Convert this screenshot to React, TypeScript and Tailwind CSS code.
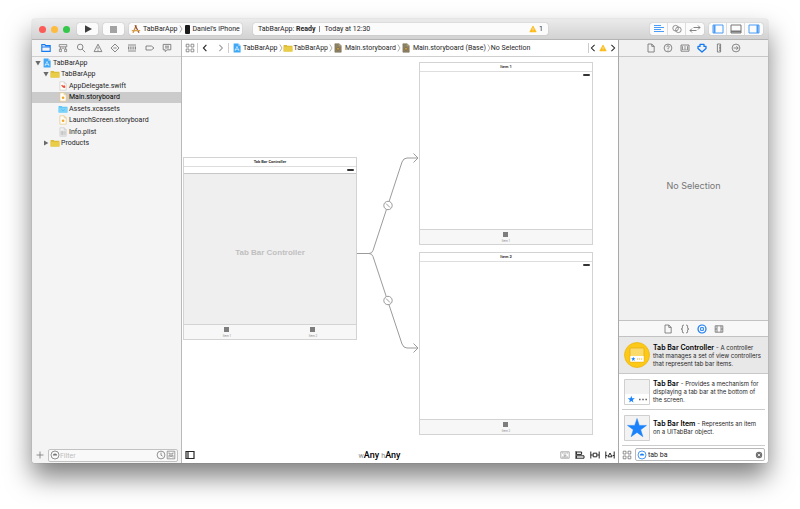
import { useState, type ReactNode } from "react"

type IconProps = { children: ReactNode; className?: string }

function Icon({ children, className = "size-[10px]" }: IconProps) {
  return (
    <svg
      viewBox="0 0 10 10"
      className={`shrink-0 ${className}`}
      fill="none"
      stroke="currentColor"
      strokeWidth="0.8"
      aria-hidden="true"
    >
      {children}
    </svg>
  )
}

function Warning({ className }: { className?: string }) {
  return (
    <Icon className={className}>
      <path d="M5 1.2 9 8.6H1Z" fill="#fdb913" stroke="#fdb913" strokeLinejoin="round" />
      <path d="M5 3.6v2.6M5 7v1" stroke="#fff" />
    </Icon>
  )
}

function ProjectIcon() {
  return (
    <Icon>
      <path d="M1.6.6h4.8l2.2 2.2v6.8h-7Z" fill="#41a8f5" stroke="none" />
      <path d="M6.4.6v2.2h2.2Z" fill="#b5dcfb" stroke="none" />
      <path d="M5 3.4 3 8M5 3.4 7 8M2.8 6.4h4.4" stroke="#d8eefe" strokeWidth="0.7" />
    </Icon>
  )
}

function FolderIcon({ blue = false }: { blue?: boolean }) {
  return (
    <Icon>
      <path d="M.6 2h3l.8.8h5V8.6H.6Z" fill={blue ? "#5cc5f6" : "#d9b935"} stroke="none" />
      <path d="M.6 3.8h8.8v4.8H.6Z" fill={blue ? "#7bd3fa" : "#eacd47"} stroke="none" />
      {blue && <path d="M3.2 5.2 5 7l1.8-1.8" stroke="#45b0e6" strokeWidth="0.5" />}
    </Icon>
  )
}

function FileIcon({ kind }: { kind: "swift" | "storyboard" | "plist" | "dark" }) {
  const dark = kind === "dark"
  const line = kind === "storyboard" ? "#e0bd74" : "#c4c4c4"
  return (
    <Icon>
      <path
        d="M1.9.8h4.3l2 2v6.4H1.9Z"
        fill={dark ? "#8d8265" : kind === "plist" ? "#f2f2f2" : "#fffdf8"}
        stroke={dark ? "#776e57" : line}
        strokeWidth="0.6"
      />
      <path d="M6.2.8v2h2" stroke={dark ? "#c3b991" : line} strokeWidth="0.6" />
      {kind === "swift" && (
        <path
          d="M3.4 4.4c1 1.6 2.4 2.4 3.6 2.2.2-.8-.2-1.6-.9-2.3.2.6.1 1-.1 1.2L4.4 4.2l.9 1.5Z"
          fill="#e8402f"
          stroke="#e8402f"
          strokeWidth="0.5"
        />
      )}
      {kind === "storyboard" && <circle cx="5.1" cy="5.8" r="1.3" fill="#f0a52b" stroke="none" />}
      {dark && <circle cx="5" cy="5.8" r="1.3" fill="#e0ac3d" stroke="#5e553e" strokeWidth="0.5" />}
      {kind === "plist" && <path d="M3 4.2h4.2v3.6H3ZM3 5.4h4.2M3 6.6h4.2M4.6 4.2v3.6" stroke="#a5a5a5" strokeWidth="0.4" />}
    </Icon>
  )
}

const navigatorTabs: { label: string; art: ReactNode }[] = [
  {
    label: "Project navigator",
    art: <path d="M.8 8.4V1.6h3l.8 1h4.6v5.8ZM.8 4h8.4" strokeWidth="1.1" />,
  },
  {
    label: "Symbol navigator",
    art: <path d="M1.2 1.6h7.6v2.2H1.2ZM2.4 3.8v2.4M7.6 3.8v2.4M1.4 6.2h2v2.4h-2ZM6.6 6.2h2v2.4h-2ZM3.6 5.2h2.8" strokeWidth="0.7" />,
  },
  {
    label: "Find navigator",
    art: (
      <>
        <circle cx="4.2" cy="4" r="2.8" />
        <path d="M6.2 6.2 9.2 9.2" />
      </>
    ),
  },
  { label: "Issue navigator", art: <path d="M5 1.2 8.9 8.6H1.1ZM5 3.8v2.4M5 6.9v.9" /> },
  {
    label: "Test navigator",
    art: <path d="M5 1 9 5 5 9 1 5ZM3.4 5h3.2" strokeLinejoin="round" />,
  },
  {
    label: "Debug navigator",
    art: <path d="M1 2h8M1 8h8M1.5 3.4v3.2M3.2 3.4v3.2M5 3.4v3.2M6.8 3.4v3.2M8.5 3.4v3.2" />,
  },
  { label: "Breakpoint navigator", art: <path d="M1 3h5.4L9 5 6.4 7H1Z" strokeLinejoin="round" /> },
  {
    label: "Report navigator",
    art: <path d="M1.2 1.4h7.6v5.4H5L3.2 8.6V6.8h-2ZM3 3.2h4M3 4.9h4" strokeLinejoin="round" />,
  },
]

const fileArt = <path d="M2 1h3.8L8.2 3.4V9H2ZM5.8 1v2.4h2.4" />

const inspectorTabs: { label: string; art: ReactNode }[] = [
  { label: "File inspector", art: fileArt },
  {
    label: "Quick help inspector",
    art: (
      <>
        <circle cx="5" cy="5" r="3.9" />
        <path d="M3.8 4.1c0-1.8 2.6-1.6 2.5-.1C6.2 4.9 5 4.8 5 6M5 6.7v.9" />
      </>
    ),
  },
  {
    label: "Identity inspector",
    art: <path d="M1 2h8v6.2H1ZM2.4 3.2v3.8M3.8 6.8c0-1.4 2.4-1.4 2.4 0M5 3.2v1.6M7.6 3.2v3.8" />,
  },
  {
    label: "Attributes inspector",
    art: <path d="M3 1.4h4V3.4h2V5.4L5 9 1 5.4v-2h2Z" strokeWidth="1.3" strokeLinejoin="round" />,
  },
  { label: "Size inspector", art: <path d="M3.4 1h3.2v8H3.4ZM5 2.8h1.6M5 4.3h1.6M5 5.8h1.6M5 7.3h1.6" /> },
  {
    label: "Connections inspector",
    art: (
      <>
        <circle cx="5" cy="5" r="3.9" />
        <path d="M2.6 5h4.6M5.4 3.2 7.2 5 5.4 6.8" />
      </>
    ),
  },
]

const libraryTabs: { label: string; art: ReactNode }[] = [
  { label: "File template library", art: fileArt },
  {
    label: "Code snippet library",
    art: (
      <path
        d="M4 1.2h-.6q-1 0-1 1v1.6Q2.4 5 1.2 5q1.2 0 1.2 1.2v1.6q0 1 1 1H4M6 1.2h.6q1 0 1 1v1.6Q7.6 5 8.8 5 7.6 5 7.6 6.2v1.6q0 1-1 1H6"
        strokeWidth="0.9"
      />
    ),
  },
  {
    label: "Object library",
    art: (
      <>
        <circle cx="5" cy="5" r="4" strokeWidth="1.2" />
        <path d="M3.6 3.6h2.8v2.8H3.6Z" strokeWidth="0.9" />
      </>
    ),
  },
  { label: "Media library", art: <path d="M1.2 1.8h7.6v6.4H1.2ZM3 1.8v6.4M7 1.8v6.4M1.2 5H3M7 5h1.8" /> },
]

function TabStrip({
  tabs,
  initial,
  className,
}: {
  tabs: { label: string; art: ReactNode }[]
  initial: number
  className: string
}) {
  const [active, setActive] = useState(initial)
  return (
    <div role="tablist" className={`flex items-center ${className}`}>
      {tabs.map((tab, i) => (
        <button
          key={tab.label}
          type="button"
          role="tab"
          aria-selected={i === active}
          aria-label={tab.label}
          onClick={() => setActive(i)}
          className={i === active ? "text-[#1479f5]" : "text-[#6c6c6c]"}
        >
          <Icon>{tab.art}</Icon>
        </button>
      ))}
    </div>
  )
}

function Toolbar() {
  const control = "flex h-3 items-center rounded-[2px] bg-[#fbfbfb] shadow-[0_0_1px_rgba(0,0,0,0.35)]"
  return (
    <header className="flex h-[21px] items-center border-b border-[#b4b4b4] bg-linear-to-b from-[#ebebeb] to-[#d2d2d2] px-[5px]">
      <div className="ml-[2px] flex gap-[5px]">
        <button type="button" aria-label="Close" className="size-[7px] rounded-full bg-[#fc5b57]" />
        <button type="button" aria-label="Minimize" className="size-[7px] rounded-full bg-[#fdbc40]" />
        <button type="button" aria-label="Zoom" className="size-[7px] rounded-full bg-[#34c84a]" />
      </div>
      <button type="button" aria-label="Run" className={`ml-[7px] w-[21px] justify-center ${control}`}>
        <Icon>
          <path d="M2 1.2v7.6L9 5Z" fill="#3c3c3c" stroke="none" />
        </Icon>
      </button>
      <button type="button" aria-label="Stop" className={`ml-[5px] w-[21px] justify-center ${control}`}>
        <span className="size-[7px] bg-[#a3a3a3]" />
      </button>
      <button type="button" className={`ml-[5px] w-[113px] pl-[2px] whitespace-nowrap ${control}`}>
        <Icon>
          <path d="M5.4 1.2 2 8.8" stroke="#c98a3c" strokeWidth="1.3" />
          <path d="M4 1.2 8 8.8" stroke="#8c4a35" strokeWidth="1.2" />
          <path d="M.8 6.6h8.4" stroke="#d8a24c" strokeWidth="1.2" />
        </Icon>
        <span className="ml-[2px]">TabBarApp</span>
        <Chevron />
        <span className="ml-[2px] h-[9px] w-[5px] rounded-[1px] bg-[#1b1b1b]" />
        <span className="ml-[3px]">Daniel's iPhone</span>
      </button>
      <div className={`mr-[102px] ml-[11px] flex-1 px-[5px] ${control}`}>
        <span>
          TabBarApp: <b className="font-bold">Ready</b>
        </span>
        <span className="mx-[4px] h-[6px] w-px bg-[#8a8a8a]" />
        <span>Today at 12:30</span>
        <Warning className="ml-auto size-[8px]" />
        <span className="ml-[2px]">1</span>
      </div>
      <div className={`${control} divide-x divide-[#dddddd]`}>
        <button type="button" aria-label="Standard editor" className="flex h-3 w-[18px] items-center justify-center">
          <svg viewBox="0 0 12 10" className="h-[10px] w-3" fill="#4a9cf7" aria-hidden="true">
            <path d="M1 1h7v1H1ZM1 3h10v1H1ZM1 5h7v1H1ZM1 7h10v1H1Z" />
          </svg>
        </button>
        <button type="button" aria-label="Assistant editor" className="flex h-3 w-[18px] items-center justify-center text-[#777777]">
          <Icon>
            <circle cx="3.6" cy="4.2" r="2.8" />
            <circle cx="6.4" cy="5.8" r="2.8" />
          </Icon>
        </button>
        <button type="button" aria-label="Version editor" className="flex h-3 w-[18px] items-center justify-center text-[#777777]">
          <svg viewBox="0 0 12 10" className="h-[10px] w-3" fill="none" stroke="currentColor" aria-hidden="true">
            <path d="M4.5 3.5h6.5M9 1.5l2 2-2 2M7.5 6.5H1M3 4.5l-2 2 2 2" strokeWidth="0.9" />
          </svg>
        </button>
      </div>
      <div className={`ml-[5px] divide-x divide-[#dddddd] ${control}`}>
        <PaneToggle label="Toggle navigator" on bar={<path d="M2.5 1v8" strokeWidth="2" />} />
        <PaneToggle label="Toggle debug area" bar={<path d="M1 7.5h10" strokeWidth="2" />} />
        <PaneToggle label="Toggle utilities" on bar={<path d="M9.5 1v8" strokeWidth="2" />} />
      </div>
    </header>
  )
}

function PaneToggle({ label, bar, on = false }: { label: string; bar: ReactNode; on?: boolean }) {
  return (
    <button
      type="button"
      aria-label={label}
      aria-pressed={on}
      className={`flex h-3 w-[18px] items-center justify-center ${on ? "text-[#4a9cf7]" : "text-[#777777]"}`}
    >
      <svg viewBox="0 0 12 10" className="h-[10px] w-3" fill="none" stroke="currentColor" aria-hidden="true">
        <path d="M1 1h10v8H1Z" />
        {bar}
      </svg>
    </button>
  )
}

function Chevron() {
  return (
    <svg viewBox="0 0 4 10" className="ml-px h-[10px] w-1 shrink-0" fill="none" stroke="#8c8c8c" strokeWidth="0.7" aria-hidden="true">
      <path d="M.8 1.5 3 5 .8 8.5" />
    </svg>
  )
}

const indent = ["pl-[3px]", "pl-[11px]", "pl-[19px]"]

const files: { name: string; depth: number; open?: boolean; icon: ReactNode }[] = [
  { name: "TabBarApp", depth: 0, open: true, icon: <ProjectIcon /> },
  { name: "TabBarApp", depth: 1, open: true, icon: <FolderIcon /> },
  { name: "AppDelegate.swift", depth: 2, icon: <FileIcon kind="swift" /> },
  { name: "Main.storyboard", depth: 2, icon: <FileIcon kind="storyboard" /> },
  { name: "Assets.xcassets", depth: 2, icon: <FolderIcon blue /> },
  { name: "LaunchScreen.storyboard", depth: 2, icon: <FileIcon kind="storyboard" /> },
  { name: "Info.plist", depth: 2, icon: <FileIcon kind="plist" /> },
  { name: "Products", depth: 1, open: false, icon: <FolderIcon /> },
]

function FilterGlyph() {
  return (
    <>
      <circle cx="5" cy="5" r="4" />
      <path d="M2.8 5.4a2.2 1.8 0 0 1 4.4 0Z" fill="currentColor" stroke="none" />
    </>
  )
}

function Navigator() {
  const [selected, setSelected] = useState(3)
  return (
    <aside className="flex w-[150px] shrink-0 flex-col border-r border-[#b9b9b9] bg-[#f4f4f4]">
      <TabStrip tabs={navigatorTabs} initial={0} className="h-[17px] justify-between border-b border-[#cfcfcf] px-[9px]" />
      <ul className="grid h-[92px] auto-rows-fr">
        {files.map((file, i) => (
          <li key={i} className="flex">
            <button
              type="button"
              onClick={() => setSelected(i)}
              className={`flex w-full items-center text-left ${indent[file.depth]} ${
                i === selected ? "bg-[#cbcbcb] text-black" : ""
              }`}
            >
              <svg viewBox="0 0 6 6" className="mr-px size-[6px]" fill="#6a6a6a" aria-hidden="true">
                {file.open === true && <path d="M.4 1h5.2L3 5.4Z" />}
                {file.open === false && <path d="M1 .4v5.2L5.4 3Z" />}
              </svg>
              {file.icon}
              <span className="ml-px">{file.name}</span>
            </button>
          </li>
        ))}
      </ul>
      <div className="mt-auto flex h-4 items-center gap-[3px] pr-[3px] pl-[3px] text-[#777777]">
        <button type="button" aria-label="Add">
          <Icon>
            <path d="M5 1.5v7M1.5 5h7" />
          </Icon>
        </button>
        <label className="flex h-[13px] min-w-0 flex-1 items-center rounded-[2px] border border-[#c2c2c2] bg-[#f9f9f9] px-px">
          <Icon>
            <FilterGlyph />
          </Icon>
          <input
            type="text"
            placeholder="Filter"
            aria-label="Filter files"
            className="min-w-0 flex-1 bg-transparent pt-px text-[7px] leading-[10px] outline-none placeholder:text-[#bdbdbd]"
          />
          <Icon>
            <circle cx="5" cy="5" r="3.9" />
            <path d="M5 2.6V5.2l1.6 1" />
          </Icon>
          <Icon>
            <path d="M1.2 1.2h7.6v7.6H1.2ZM3 7.6V5.2h4v2.4M3 2.4v1.4h4V2.4M3.8 6.4h2.4" strokeWidth="0.7" />
          </Icon>
        </label>
      </div>
    </aside>
  )
}

function JumpBar() {
  const crumbs: { text: string; icon?: ReactNode; gap: string }[] = [
    { text: "TabBarApp", icon: <ProjectIcon />, gap: "ml-px" },
    { text: "TabBarApp", icon: <FolderIcon />, gap: "ml-px" },
    { text: "Main.storyboard", icon: <FileIcon kind="dark" />, gap: "ml-[2px]" },
    { text: "Main.storyboard (Base)", icon: <FileIcon kind="dark" />, gap: "ml-[2px]" },
    { text: "No Selection", gap: "ml-0" },
  ]
  return (
    <nav className="flex h-[17px] shrink-0 items-center border-b border-[#cfcfcf] bg-white pr-px pl-[3px]">
      <button type="button" aria-label="Related items" className="text-[#777777]">
        <Icon>
          <path d="M1.2 1.2h2.8v2.8H1.2ZM6 1.2h2.8v2.8H6ZM1.2 6h2.8v2.8H1.2ZM6 6h2.8v2.8H6Z" />
        </Icon>
      </button>
      <span className="ml-[2px] h-[10px] w-px bg-[#cccccc]" />
      <button type="button" aria-label="Back" className="ml-[2px]">
        <Icon>
          <path d="M6.4 1.8 3.4 5l3 3.2" strokeWidth="1.1" />
        </Icon>
      </button>
      <button type="button" aria-label="Forward" className="ml-[6px] text-[#a0a0a0]">
        <Icon>
          <path d="M3.4 1.8 6.4 5l-3 3.2" strokeWidth="1.1" />
        </Icon>
      </button>
      <span className="ml-[2px] h-[10px] w-px bg-[#cccccc]" />
      <ol className="ml-[3px] flex items-center whitespace-nowrap">
        {crumbs.map((crumb, i) => (
          <li key={i} className="flex items-center">
            {crumb.icon}
            <button type="button" className={crumb.gap}>
              {crumb.text}
            </button>
            {i < crumbs.length - 1 && <Chevron />}
          </li>
        ))}
      </ol>
      <span className="ml-auto h-[10px] w-px bg-[#cccccc]" />
      <button type="button" aria-label="Previous issue">
        <Icon className="size-[8px]">
          <path d="M7 1 3 5l4 4" strokeWidth="1.3" />
        </Icon>
      </button>
      <Warning className="mx-[2px] size-[8px]" />
      <button type="button" aria-label="Next issue">
        <Icon className="size-[8px]">
          <path d="M3 1l4 4-4 4" strokeWidth="1.3" />
        </Icon>
      </button>
    </nav>
  )
}

function Scene({
  title,
  tabs,
  place,
  children,
}: {
  title: string
  tabs: string[]
  place: string
  children?: ReactNode
}) {
  return (
    <section className={`absolute flex h-[183px] w-[174px] flex-col border border-[#d3d3d3] bg-white ${place}`}>
      <h2 className="h-[9px] border-b border-[#dedede] text-center text-[4px] leading-[8px] font-bold text-[#333333]">
        {title}
      </h2>
      <div className="flex h-[6px] shrink-0 items-center justify-end pr-[2px]">
        <span className="h-[2px] w-[7px] rounded-[1px] bg-[#333333]" />
      </div>
      <div className="flex flex-1 flex-col">{children}</div>
      <div className="flex h-[15px] shrink-0 items-center justify-around border-t border-[#d3d3d3] bg-[#f7f7f7]">
        {tabs.map((tab) => (
          <div key={tab} className="flex flex-col items-center gap-[2px]">
            <span className="size-[5px] bg-[#7d7d7d]" />
            <span className="text-[3px] leading-[4px] text-[#8f8f8f]">{tab}</span>
          </div>
        ))}
      </div>
    </section>
  )
}

function Canvas() {
  return (
    <div className="relative min-h-[390px] flex-1 overflow-hidden bg-white">
      <Scene title="Tab Bar Controller" tabs={["Item 1", "Item 2"]} place="left-px top-[100px]">
        <div className="flex flex-1 items-center justify-center border-t border-[#c6c6c6] bg-[#efefef] pt-2 font-[Liberation_Sans,sans-serif] text-[8px] font-bold text-[#bfbfbf]">
          Tab Bar Controller
        </div>
      </Scene>
      <Scene title="Item 1" tabs={["Item 1"]} place="left-[237px] top-[5px]" />
      <Scene title="Item 2" tabs={["Item 2"]} place="left-[237px] top-[195px]" />
      <svg
        viewBox="0 0 240 390"
        className="absolute top-0 left-0 h-[390px] w-[240px]"
        fill="none"
        stroke="#9b9b9b"
        aria-hidden="true"
      >
        <path d="M175 196.5h12q3 0 4-3L220 105q1.5-4 5-4h11" />
        <path d="M187 196.5q3 0 4 3L220 287q1.5 4 5 4h11" />
        <path d="M231.5 96.5 236 101l-4.5 4.5M231.5 286.5 236 291l-4.5 4.5" />
        <circle cx="206" cy="148.5" r="4.2" fill="#fff" />
        <circle cx="206" cy="243.5" r="4.2" fill="#fff" />
        <path d="M204 146.5l4 4M204 241.5l4 4" />
      </svg>
    </div>
  )
}

function CanvasFooter() {
  return (
    <footer className="flex h-4 shrink-0 items-center bg-white px-[3px]">
      <button type="button" aria-label="Show document outline">
        <Icon>
          <path d="M1 1.5h8v7H1ZM3 1.5v7" strokeWidth="1.2" />
        </Icon>
      </button>
      <button type="button" className="mx-auto pt-px pl-1 text-[9px] leading-[10px] font-medium text-black">
        <span className="text-[7px] font-normal text-[#8a8a8a]">w</span>Any{" "}
        <span className="text-[7px] font-normal text-[#8a8a8a]">h</span>Any
      </button>
      <div className="flex gap-[5px]">
        <button type="button" aria-label="Stack" className="text-[#999999]">
          <Icon>
            <path d="M.8 1.8h8.4v6.4H.8ZM5 2.6v3.6M3.4 4.8 5 6.4l1.6-1.6M2 7h6M2 3h1.6M6.4 3H8" />
          </Icon>
        </button>
        <button type="button" aria-label="Align">
          <Icon>
            <path d="M1 1v8M1.4 2h5.2v2.4H1.4ZM1.4 5.8h7.6v2.4H1.4Z" strokeWidth="1" />
          </Icon>
        </button>
        <button type="button" aria-label="Pin">
          <Icon>
            <path d="M.8 1.5v7M9.2 1.5v7M3.2 3.2h3.6v3.6H3.2ZM.8 5h2M7.2 5h2" strokeWidth="1" />
          </Icon>
        </button>
        <button type="button" aria-label="Resolve auto layout issues">
          <Icon>
            <path d="M.8 1.5v7M9.2 1.5v7M5 3 7 6.8H3ZM.8 5.5h1.6M7.6 5.5h1.6" strokeWidth="1" />
          </Icon>
        </button>
      </div>
    </footer>
  )
}

const star = "M13 3.5l2.3 6.9h7.2l-5.8 4.3 2.2 7-5.9-4.3-5.9 4.3 2.2-7-5.8-4.3h7.2Z"

const libraryItems: { name: string; lines: string[]; art: ReactNode }[] = [
  {
    name: "Tab Bar Controller",
    lines: ["A controller", "that manages a set of view controllers", "that represent tab bar items."],
    art: (
      <>
        <circle cx="13" cy="13" r="12.5" fill="#fcc917" stroke="#e9b10c" strokeWidth="0.7" />
        <path d="M6 6h14v14H6Z" fill="#fbdc6b" stroke="#e2ab17" strokeWidth="0.7" />
        <path d="M6.3 14h13.4v5.7H6.3Z" fill="#fff" />
        <path d="M9.3 14.8l.6 1.5h1.6l-1.3 1 .5 1.6-1.4-1-1.4 1 .5-1.6-1.3-1h1.6Z" fill="#1a82fb" />
        <path d="M13 17h1.2M15 17h1.2M17 17h1.2" stroke="#eeb41a" strokeWidth="1.2" />
      </>
    ),
  },
  {
    name: "Tab Bar",
    lines: ["Provides a mechanism for", "displaying a tab bar at the bottom of", "the screen."],
    art: (
      <>
        <path d="M.5.5h25v25H.5Z" fill="#fff" stroke="#cfcfcf" />
        <path d="M1 1h24v14H1Z" fill="#f1f1f1" />
        <path d="M7.3 16.8l.9 2.5h2.7l-2.2 1.6.8 2.6-2.2-1.6-2.2 1.6.8-2.6-2.2-1.6h2.7Z" fill="#1a82fb" />
        <path d="M15 20.5h1.6M18.2 20.5h1.6M21.4 20.5H23" stroke="#666" strokeWidth="1.4" />
      </>
    ),
  },
  {
    name: "Tab Bar Item",
    lines: ["Represents an item", "on a UITabBar object."],
    art: (
      <>
        <path d="M.5.5h25v25H.5Z" fill="#f3f3f3" stroke="#cfcfcf" />
        <path d={star} fill="#1a82fb" stroke="#1a82fb" strokeWidth="0.5" />
      </>
    ),
  },
]

function Utilities() {
  const [query, setQuery] = useState("tab ba")
  return (
    <aside className="flex w-[150px] shrink-0 flex-col border-l border-[#a9a9a9] bg-white">
      <TabStrip tabs={inspectorTabs} initial={3} className="h-[17px] justify-center gap-[7px] border-b border-[#c6c6c6] bg-[#f1f1f1]" />
      <div className="flex flex-1 items-center justify-center bg-[#f0f0f0] pb-[6px] font-[Inter,sans-serif] text-[9px] text-[#757575]">
        No Selection
      </div>
      <TabStrip tabs={libraryTabs} initial={2} className="h-[17px] justify-center gap-[7px] border-y border-[#c2c2c2] bg-[#f8f8f8]" />
      <ul>
        {libraryItems.map((item, i) => (
          <li key={item.name} className={i === 0 ? "border-b border-[#c8c8c8] bg-[#e8e8e8] px-[3px]" : "px-[3px]"}>
            <div className={`flex h-9 items-center gap-[3px] pl-[2px] ${i === 0 ? "" : "border-b border-[#cccccc]"}`}>
              <svg viewBox="0 0 26 26" className="size-[26px] shrink-0" aria-hidden="true">
                {item.art}
              </svg>
              <div className="pt-px font-[Inter,sans-serif] leading-[8px] whitespace-nowrap">
                <p className="flex gap-[2px] text-[6px]">
                  <b className="text-[7px] font-semibold text-black">{item.name}</b>
                  <span>- {item.lines[0]}</span>
                </p>
                {item.lines.slice(1).map((line) => (
                  <p key={line} className="text-[6px]">
                    {line}
                  </p>
                ))}
              </div>
            </div>
          </li>
        ))}
      </ul>
      <div className="flex h-[17px] items-center gap-[3px] px-[3px] text-[#777777]">
        <button type="button" aria-label="Icon view">
          <Icon>
            <path d="M1.2 1.2h2.8v2.8H1.2ZM6 1.2h2.8v2.8H6ZM1.2 6h2.8v2.8H1.2ZM6 6h2.8v2.8H6Z" />
          </Icon>
        </button>
        <div className="flex h-[13px] min-w-0 flex-1 items-center rounded-[2px] border border-[#b9b9b9] bg-white px-px">
          <Icon className="size-[10px] text-[#1a7ff5]">
            <FilterGlyph />
          </Icon>
          <input
            type="text"
            aria-label="Search objects"
            value={query}
            onChange={(e) => setQuery(e.target.value)}
            className="ml-px min-w-0 flex-1 bg-transparent pt-px text-[7px] leading-[10px] text-[#222222] outline-none"
          />
          <button type="button" aria-label="Clear" onClick={() => setQuery("")}>
            <Icon className="size-[8px]">
              <circle cx="5" cy="5" r="4" fill="#6f6f6f" stroke="none" />
              <path d="M3.4 3.4l3.2 3.2M6.6 3.4 3.4 6.6" stroke="#fff" strokeWidth="1" />
            </Icon>
          </button>
        </div>
      </div>
    </aside>
  )
}

export default function App() {
  return (
    <div className="flex min-h-screen flex-col bg-white px-8 pt-[19px] pb-[46px] font-[Roboto,sans-serif] text-[7px] leading-[8px] text-[#262626]">
      <div className="flex flex-1 flex-col overflow-hidden rounded-[3px] shadow-[0_14px_26px_rgba(0,0,0,0.5),0_0_1px_rgba(0,0,0,0.4)]">
        <Toolbar />
        <div className="flex flex-1">
          <Navigator />
          <main className="flex min-w-0 flex-1 flex-col">
            <JumpBar />
            <Canvas />
            <CanvasFooter />
          </main>
          <Utilities />
        </div>
      </div>
    </div>
  )
}
